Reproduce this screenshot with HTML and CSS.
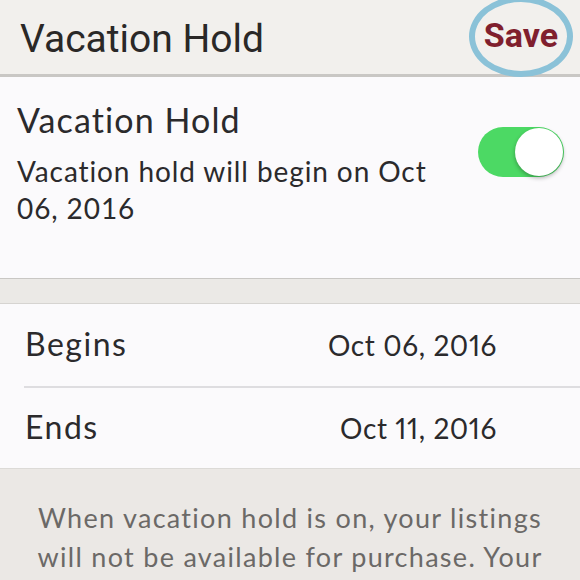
FILE: index.html
```html
<!DOCTYPE html>
<html lang="en">
<head>
    <meta charset="UTF-8">
    <meta name="viewport" content="width=device-width, initial-scale=1.0">
    <title>Vacation Hold</title>
    <link rel="stylesheet" href="styles.css">
</head>
<body>
    <div class="header">
        <div class="header-title">Vacation Hold</div>
        <div class="save">Save</div>
        <span class="save-ring"></span>
    </div>

    <div class="hold-section">
        <div class="hold-text">
            <div class="hold-title">Vacation Hold</div>
            <div class="hold-desc">Vacation hold will begin on Oct 06, 2016</div>
        </div>
        <div class="toggle">
            <div class="toggle-knob"></div>
        </div>
    </div>

    <div class="spacer"></div>

    <div class="dates">
        <div class="date-row">
            <span class="date-label">Begins</span>
            <span class="date-value">Oct 06, 2016</span>
        </div>
        <div class="date-row">
            <span class="date-label">Ends</span>
            <span class="date-value">Oct 11, 2016</span>
        </div>
    </div>

    <div class="note">
        When vacation hold is on, your listings will not be available for purchase. Your offers will be paused.
    </div>
</body>
</html>
```

FILE: styles.css
```css
body {
    margin: 0;
    background: #ebe8e5;
    font-family: Lato, "Open Sans", sans-serif;
    color: #2b2a2c;
    overflow: hidden;
}
.header {
    position: relative;
    height: 74px;
    background: #f2f0ed;
    border-bottom: 3px solid #c9c7c4;
    display: flex;
    align-items: flex-start;
    justify-content: space-between;
    padding: 0 22px 0 20px;
}
.header-title {
    font-family: Roboto, sans-serif;
    font-size: 39px;
    line-height: 44px;
    color: #2a2827;
    margin-top: 17px;
}
.save {
    font-family: Roboto, sans-serif;
    font-weight: bold;
    font-size: 34px;
    line-height: 40px;
    color: #801f2e;
    margin-top: 15px;
}
.save-ring {
    position: absolute;
    left: 469px;
    top: -4px;
    width: 104px;
    height: 81px;
    box-sizing: border-box;
    border: 6px solid #8bc2d8;
    border-radius: 50%;
}
.hold-section {
    background: #fbfafc;
    height: 201px;
    display: flex;
    justify-content: space-between;
    padding: 0 16px 0 17px;
}
.hold-title {
    font-size: 34px;
    line-height: 40px;
    letter-spacing: 1.1px;
    margin-top: 23px;
}
.hold-desc {
    font-size: 28px;
    line-height: 37px;
    letter-spacing: 0.9px;
    width: 430px;
    margin-top: 13px;
}
.toggle {
    width: 86px;
    height: 50px;
    border-radius: 25px;
    background: #4cd964;
    margin-top: 50px;
    position: relative;
    flex-shrink: 0;
}
.toggle-knob {
    position: absolute;
    right: 1px;
    top: 1px;
    width: 48px;
    height: 48px;
    border-radius: 50%;
    background: #fff;
    box-shadow: 0 2px 4px rgba(0,0,0,0.3);
}
.spacer {
    height: 24px;
    background: #ebe9e6;
    border-top: 1px solid #c9c7c4;
    border-bottom: 1px solid #d6d4d1;
}
.dates {
    background: #fbfafc;
    padding-left: 24px;
    border-bottom: 1px solid #dcdad7;
}
.date-row {
    height: 82px;
    box-sizing: border-box;
    display: flex;
    align-items: baseline;
    justify-content: space-between;
    padding: 20px 83px 0 1px;
}
.date-row + .date-row {
    border-top: 2px solid #dedde0;
    padding-top: 19px;
}
.date-label {
    font-size: 32px;
    line-height: 40px;
    letter-spacing: 1.5px;
}
.date-value {
    font-size: 28px;
    letter-spacing: 0.6px;
    font-variant-numeric: proportional-nums;
}
.note {
    text-align: center;
    font-size: 27px;
    line-height: 39px;
    letter-spacing: 1.3px;
    color: #6b6967;
    padding: 29px 30px 0;
}
```
